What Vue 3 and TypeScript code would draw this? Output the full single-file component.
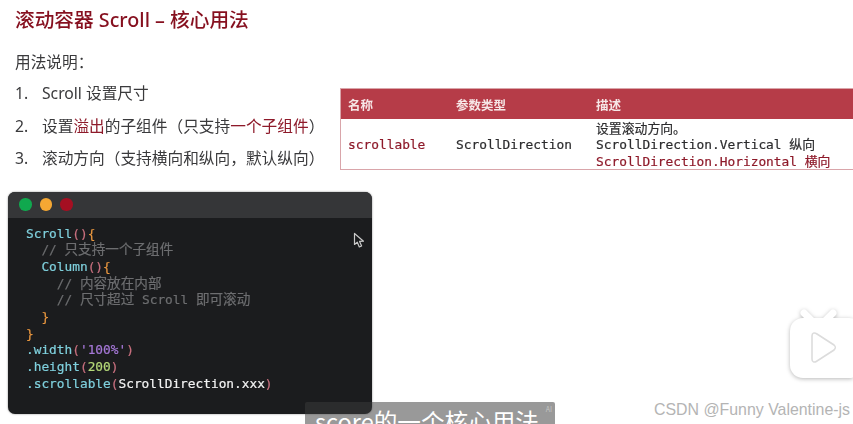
<script setup lang="ts">
const dots: string[] = ['#10a84e', '#f5a733', '#a50f22']
</script>

<template>
  <div class="slide">
    <h1 class="title">滚动容器 Scroll – 核心用法</h1>
    <div class="upper">
      <div class="usage">
        <p class="lead">用法说明：</p>
        <ol class="steps">
          <li><span class="num">1.</span><span>Scroll 设置尺寸</span></li>
          <li><span class="num">2.</span><span>设置<em>溢出</em>的子组件（只支持<em>一个子组件</em>）</span></li>
          <li><span class="num">3.</span><span>滚动方向（支持横向和纵向，默认纵向）</span></li>
        </ol>
      </div>
      <div class="table">
        <div class="thead">
          <span class="c1">名称</span><span class="c2">参数类型</span><span class="c3">描述</span>
        </div>
        <div class="tbody">
          <span class="c1 mono red">scrollable</span>
          <span class="c2 mono">ScrollDirection</span>
          <div class="c3 mono desc">
            <div>设置滚动方向。</div>
            <div>ScrollDirection.Vertical 纵向</div>
            <div class="red">ScrollDirection.Horizontal 横向</div>
          </div>
        </div>
      </div>
    </div>

    <div class="window">
      <div class="bar">
        <i v-for="d in dots" :key="d" :style="{ background: d }"></i>
      </div>
      <div class="code">
        <div class="line"><span class="cy">Scroll</span><span class="pk">()</span><span class="or">{</span></div>
        <div class="line i1"><span class="cm">// <span class="zh">只支持一个子组件</span></span></div>
        <div class="line i1"><span class="cy">Column</span><span class="pk">()</span><span class="or">{</span></div>
        <div class="line i2"><span class="cm">// <span class="zh">内容放在内部</span></span></div>
        <div class="line i2"><span class="cm">// <span class="zh">尺寸超过</span> Scroll <span class="zh">即可滚动</span></span></div>
        <div class="line i1"><span class="or">}</span></div>
        <div class="line"><span class="or">}</span></div>
        <div class="line"><span class="cy">.width</span><span class="pk">(</span><span class="pu">'100%'</span><span class="pk">)</span></div>
        <div class="line"><span class="cy">.height</span><span class="pk">(</span><span class="gn">200</span><span class="pk">)</span></div>
        <div class="line"><span class="cy">.scrollable</span><span class="pk">(</span><span class="wh">ScrollDirection.xxx</span><span class="pk">)</span></div>
      </div>
      <svg class="cursor" width="13" height="17" viewBox="0 0 13 17">
        <path d="M1.5 1.5 L1.5 12.5 L4.3 10.2 L6.3 15 L8.6 14 L6.6 9.4 L10.5 9.2 Z" fill="#1a1b1d" stroke="#c9c9c9" stroke-width="1.2" stroke-linejoin="round" />
      </svg>
    </div>

    <div class="subtitle">score的一个核心用法<sup>AI</sup></div>

    <svg class="tv" width="66" height="72" viewBox="0 0 66 72">
      <path d="M17 4 L26 13 M46 4 L37 13" stroke="#fff" stroke-width="7" stroke-linecap="round" />
      <rect x="3" y="9" width="72" height="60" rx="13" fill="#fff" />
      <path d="M25 27 C25 24 27 23 30 25 L47 36 C49 38 49 39 47 41 L30 52 C27 54 25 53 25 50 Z" fill="#fff" stroke="#dcdcdc" stroke-width="1.6" />
    </svg>

    <div class="mark">CSDN @Funny Valentine-js</div>
  </div>
</template>

<style scoped>
.slide {
  position: relative;
  width: 853px;
  height: 424px;
  overflow: hidden;
  background: #fff;
  box-sizing: border-box;
  padding: 7px 0 0 0;
  font-family: "Noto Sans", "Noto Sans CJK SC", sans-serif;
  color: #3a3a3c;
}
.title {
  margin: 0 0 0 15px;
  font-size: 19.7px;
  line-height: 26px;
  font-weight: 500;
  color: #86101f;
  filter: blur(.3px);
}
.upper {
  display: flex;
  align-items: flex-start;
  margin-top: 16px;
}
.usage {
  width: 340px;
  flex: none;
  padding-left: 15px;
  box-sizing: border-box;
  font-size: 15.7px;
  filter: blur(.3px);
}
.lead {
  margin: 0;
  line-height: 26px;
}
.steps {
  list-style: none;
  margin: 5px 0 0;
  padding: 0;
}
.steps li {
  display: flex;
  height: 32.5px;
  line-height: 26px;
  white-space: nowrap;
}
.num {
  width: 27px;
  flex: none;
}
em {
  font-style: normal;
  color: #8e1a2a;
}
.table {
  margin-top: 39px;
  flex: 1;
  border: 1px solid #d9a5aa;
  border-right: 0;
  box-sizing: border-box;
  height: 82px;
  filter: blur(.3px);
}
.thead,
.tbody {
  display: flex;
  align-items: center;
  padding-left: 7px;
}
.thead {
  height: 30px;
  background: #b63c48;
  color: #f6e6e6;
  font-size: 12.5px;
  font-weight: 700;
}
.tbody {
  height: 50px;
  color: #2c2c2e;
}
.c1 { width: 108px; flex: none; }
.c2 { width: 140px; flex: none; }
.c3 { flex: 1; }
.mono {
  font-family: "DejaVu Sans Mono", "Noto Sans CJK SC", monospace;
  font-size: 12.85px;
  -webkit-text-stroke: .2px currentColor;
}
.desc {
  line-height: 16.5px;
  white-space: nowrap;
  padding-top: 3px;
}
.red { color: #8e1a2a; }
.window {
  position: relative;
  width: 364px;
  height: 222px;
  margin: 14px 0 0 8px;
  border-radius: 7px;
  overflow: hidden;
  background: #1b1c1e;
  box-shadow: 0 0 2px rgba(0, 0, 0, .5);
}
.bar {
  height: 26px;
  background: #353638;
  display: flex;
  align-items: center;
  gap: 8px;
  padding-left: 11px;
}
.bar i {
  display: block;
  width: 12.5px;
  height: 12.5px;
  border-radius: 50%;
}
.code {
  padding: 8px 0 0 18px;
  font-family: "DejaVu Sans Mono", "Noto Sans CJK SC", monospace;
  font-size: 12.8px;
  -webkit-text-stroke: .2px currentColor;
  filter: blur(.3px);
}
.line {
  height: 16.7px;
  line-height: 16.7px;
  white-space: pre;
}
.i1 { padding-left: 15.4px; }
.i2 { padding-left: 30.8px; }
.zh { font-size: 13.6px; line-height: 0; }
.cy { color: #7fd0dd; }
.pk { color: #c9707f; }
.or { color: #e8963f; }
.cm { color: #6d6e70; }
.pu { color: #a678d8; }
.gn { color: #b5d979; }
.wh { color: #f2f2f2; }
.cursor {
  position: absolute;
  left: 345px;
  top: 40px;
}
.subtitle {
  position: absolute;
  left: 305px;
  top: 402px;
  width: 250px;
  height: 22px;
  box-sizing: border-box;
  padding: 4px 0 0 10px;
  border-radius: 2px 2px 0 0;
  background: rgba(60, 60, 60, .52);
  color: #fff;
  font-family: "Noto Sans CJK SC", sans-serif;
  font-size: 23.6px;
  line-height: 30px;
  white-space: nowrap;
  overflow: hidden;
}
.subtitle sup {
  position: absolute;
  top: 3px;
  right: 3px;
  font-size: 7px;
  line-height: 8px;
  color: #c4c4c4;
}
.tv {
  position: absolute;
  left: 787px;
  top: 309px;
  overflow: hidden;
  filter: drop-shadow(0 1px 2px rgba(0, 0, 0, .28));
}
.mark {
  position: absolute;
  left: 654px;
  top: 401px;
  font-family: "Liberation Sans", sans-serif;
  font-size: 15.9px;
  line-height: 18px;
  color: #b4b4b4;
  white-space: nowrap;
}
</style>
